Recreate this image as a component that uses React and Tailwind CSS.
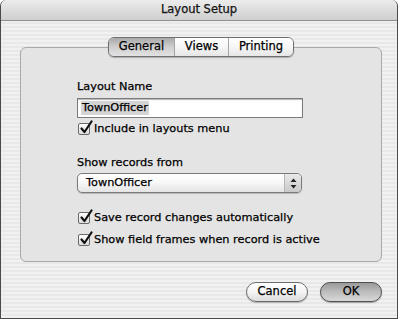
import { useState } from 'react';

const font = { fontFamily: '"DejaVu Sans", "Lucida Grande", sans-serif' };

function CheckBox({ checked }) {
  return (
    <span className="relative inline-block w-[12px] h-[12px] shrink-0 rounded-[2px] border border-[#6a6a6a] bg-gradient-to-b from-white to-[#dcdcdc]">
      {checked && (
        <svg className="absolute -top-[4px] left-[0px]" width="15" height="15" viewBox="0 0 15 15">
          <path d="M2.5 8.5 L5.5 12 L12.5 1.5" fill="none" stroke="#111" strokeWidth="2.2" strokeLinecap="round" strokeLinejoin="round" />
        </svg>
      )}
    </span>
  );
}

function CheckRow({ label }) {
  const [on, setOn] = useState(true);
  return (
    <label className="flex items-center gap-[4px] h-[18px] text-[11.3px] text-black cursor-default" onClick={() => setOn(!on)}>
      <CheckBox checked={on} />
      <span>{label}</span>
    </label>
  );
}

export default function App() {
  const [tab, setTab] = useState('General');
  const tabs = [
    { name: 'General', w: 'w-[65px]' },
    { name: 'Views', w: 'w-[54px]' },
    { name: 'Printing', w: 'w-[65px]' },
  ];

  return (
    <div className="w-[400px] h-[319px] bg-white [-webkit-text-stroke:0.25px_#000]" style={font}>
      <div className="w-[398px] h-[319px] flex flex-col rounded-t-[6px] border-l border-r border-b border-[#4a4a4a] bg-[repeating-linear-gradient(to_bottom,#f1f1f1_0px,#f1f1f1_2px,#e8e8e8_2px,#e8e8e8_4px)] overflow-hidden">
        {/* title bar */}
        <div className="h-[21px] shrink-0 flex items-center justify-center rounded-t-[6px] border-b border-[#8f8f8f] bg-gradient-to-b from-[#ececec] to-[#cfcfcf] text-[11.5px] text-[#1a1a1a]">
          Layout Setup
        </div>

        {/* group box with tabs */}
        <div className="ml-[19px] mt-[26px] w-[362px] h-[215px] shrink-0 rounded-[6px] border border-[#a9a9a9] bg-[#e4e4e4] flex flex-col">
          <div className="-mt-[11px] self-center flex h-[20px] rounded-[6px] border border-[#6f6f6f] overflow-hidden shadow-[0_1px_1px_rgba(0,0,0,0.25)]">
            {tabs.map((t, i) => (
              <button
                key={t.name}
                onClick={() => setTab(t.name)}
                className={`${t.w} h-full flex items-center justify-center text-[11.5px] text-black ${i > 0 ? 'border-l border-[#a5a5a5]' : ''} ${tab === t.name ? 'bg-gradient-to-b from-[#a9a9a9] via-[#cfcfcf] to-[#e2e2e2]' : 'bg-gradient-to-b from-white via-[#f6f6f6] to-[#e6e6e6]'}`}
              >
                {t.name}
              </button>
            ))}
          </div>

          <div className="pl-[56px] pt-[23px] flex flex-col">
            <div className="text-[11.3px] h-[14px] leading-[14px] text-black">Layout Name</div>
            <div className="mt-[4px] w-[226px] h-[20px] border border-[#7c7c7c] bg-white flex items-center px-[3px] shadow-[inset_0_1px_1px_rgba(0,0,0,0.3)]">
              <span className="bg-[#d4d4d4] text-[11.3px] leading-[14px] text-black px-[1px]">TownOfficer</span>
            </div>
            <div className="mt-[2px] ml-[1px]">
              <CheckRow label="Include in layouts menu" />
            </div>

            <div className="mt-[18px] text-[11.3px] h-[14px] leading-[14px] text-black">Show records from</div>
            <div className="mt-[3px] w-[225px] h-[20px] rounded-[5px] border border-[#7a7a7a] bg-gradient-to-b from-white via-[#f7f7f7] to-[#e4e4e4] flex items-stretch shadow-[0_1px_1px_rgba(0,0,0,0.2)]">
              <span className="flex-1 flex items-center pl-[8px] text-[11.3px] text-black">TownOfficer</span>
              <span className="w-[17px] border-l border-[#b5b5b5] bg-gradient-to-b from-[#e9e9e9] to-[#c9c9c9] rounded-r-[4px] flex items-center justify-center">
                <svg width="7" height="11" viewBox="0 0 7 11">
                  <path d="M3.5 0.5 L6.5 4 L0.5 4 Z" fill="#222" />
                  <path d="M0.5 7 L6.5 7 L3.5 10.5 Z" fill="#222" />
                </svg>
              </span>
            </div>

            <div className="mt-[16px] ml-[1px] flex flex-col gap-[4px]">
              <CheckRow label="Save record changes automatically" />
              <CheckRow label="Show field frames when record is active" />
            </div>
          </div>
        </div>

        {/* buttons */}
        <div className="mt-[20px] pr-[15px] flex justify-end gap-[12px]">
          <button className="w-[62px] h-[20px] rounded-full border border-[#6d6d6d] bg-gradient-to-b from-white via-[#f4f4f4] to-[#dcdcdc] text-[11.5px] text-black shadow-[0_1px_1px_rgba(0,0,0,0.25)]">
            Cancel
          </button>
          <button className="w-[62px] h-[20px] rounded-full border border-[#505050] bg-gradient-to-b from-[#9a9a9a] via-[#bdbdbd] to-[#d8d8d8] text-[11.5px] text-black shadow-[0_1px_1px_rgba(0,0,0,0.3)]">
            OK
          </button>
        </div>
      </div>
    </div>
  );
}
